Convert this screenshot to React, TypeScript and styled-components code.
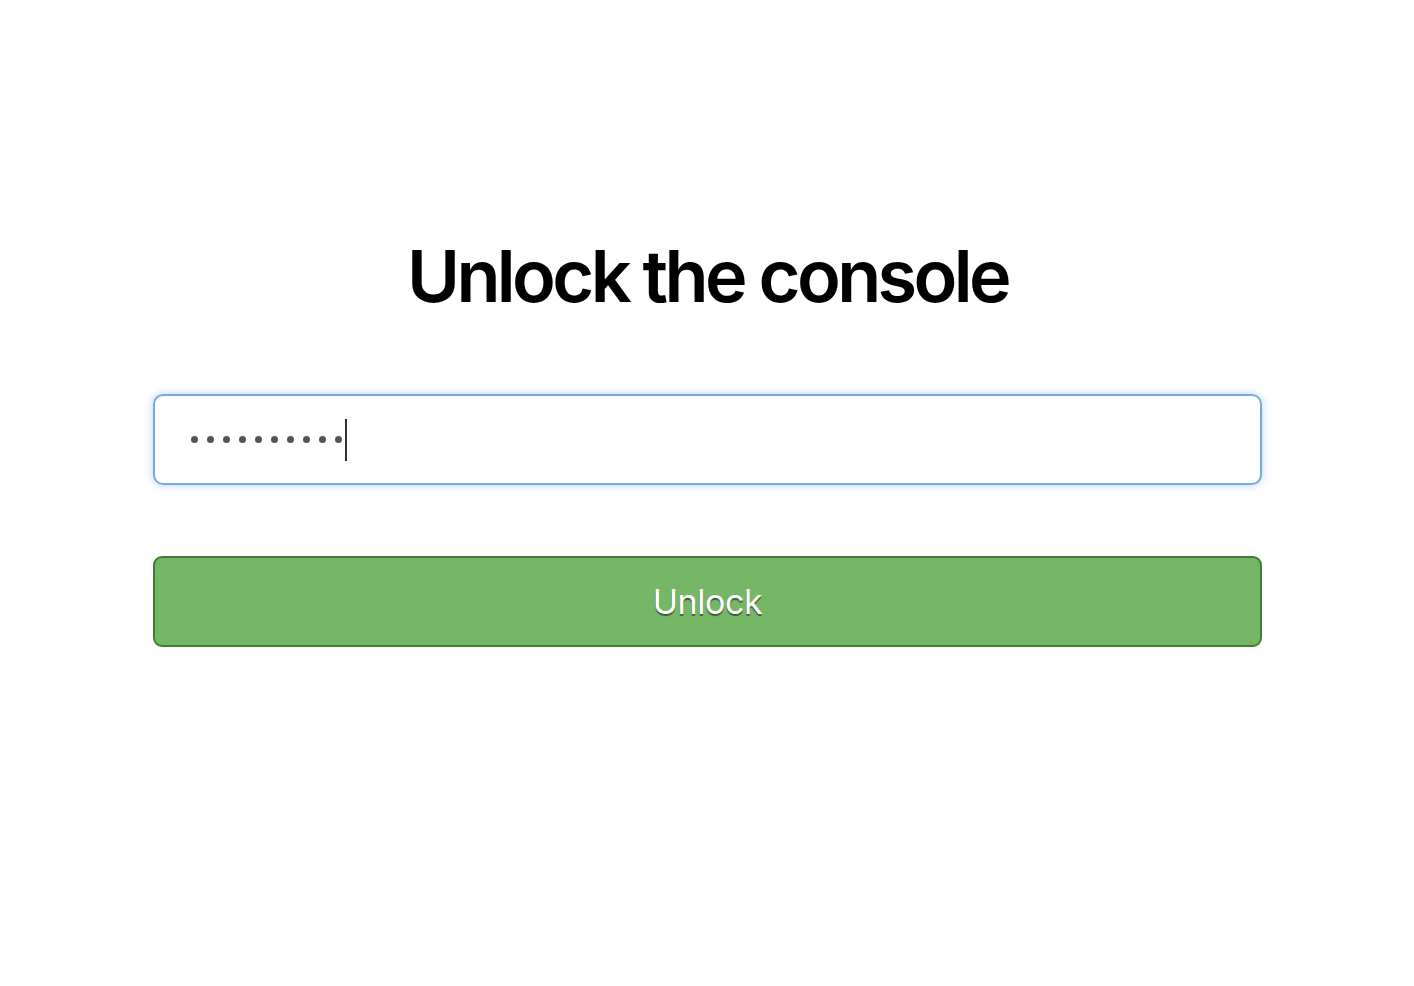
import React from "react";
import styled, { createGlobalStyle } from "styled-components";

const Global = createGlobalStyle`
  html, body { margin: 0; padding: 0; background: #ffffff; }
  body { font-family: Inter, "Liberation Sans", Arial, sans-serif; }
`;

const Page = styled.main`
  display: flex;
  flex-direction: column;
  align-items: center;
  padding: 230px 0 0 1px;
`;

const Form = styled.form`
  width: 1109px;
  display: flex;
  flex-direction: column;
`;

const Title = styled.h1`
  margin: 0 0 72px;
  text-align: center;
  font-family: Inter, "Liberation Sans", Arial, sans-serif;
  font-weight: 600;
  font-size: 72px;
  line-height: 92px;
  color: #000;
  letter-spacing: -3.6px;
`;

const Field = styled.div`
  box-sizing: border-box;
  height: 91px;
  border: 2px solid #74a9e2;
  border-radius: 10px;
  box-shadow: 0 0 8px rgba(102, 160, 230, 0.45);
  display: flex;
  align-items: center;
  padding-left: 36px;
`;

const Dots = styled.span`
  display: flex;
  gap: 9px;
`;

const Dot = styled.span`
  width: 7px;
  height: 7px;
  border-radius: 50%;
  background: #555;
`;

const Caret = styled.span`
  width: 2px;
  height: 42px;
  margin-left: 3px;
  background: #333;
`;

const Button = styled.button`
  box-sizing: border-box;
  margin-top: 71px;
  height: 91px;
  width: 100%;
  border: 2px solid #3f7d34;
  border-radius: 9px;
  background: #76b767;
  color: #fff;
  font-family: Inter, "Liberation Sans", Arial, sans-serif;
  font-size: 34px;
  letter-spacing: -0.4px;
  text-shadow: 0 2px 1px rgba(0, 0, 0, 0.5);
  cursor: pointer;
`;

export default function App() {
  return (
    <>
      <Global />
      <Page>
        <Form onSubmit={(e) => e.preventDefault()}>
          <Title>Unlock the console</Title>
          <Field role="textbox" aria-label="Password">
            <Dots>
              {Array.from({ length: 10 }).map((_, i) => (
                <Dot key={i} />
              ))}
            </Dots>
            <Caret />
          </Field>
          <Button type="submit">Unlock</Button>
        </Form>
      </Page>
    </>
  );
}
